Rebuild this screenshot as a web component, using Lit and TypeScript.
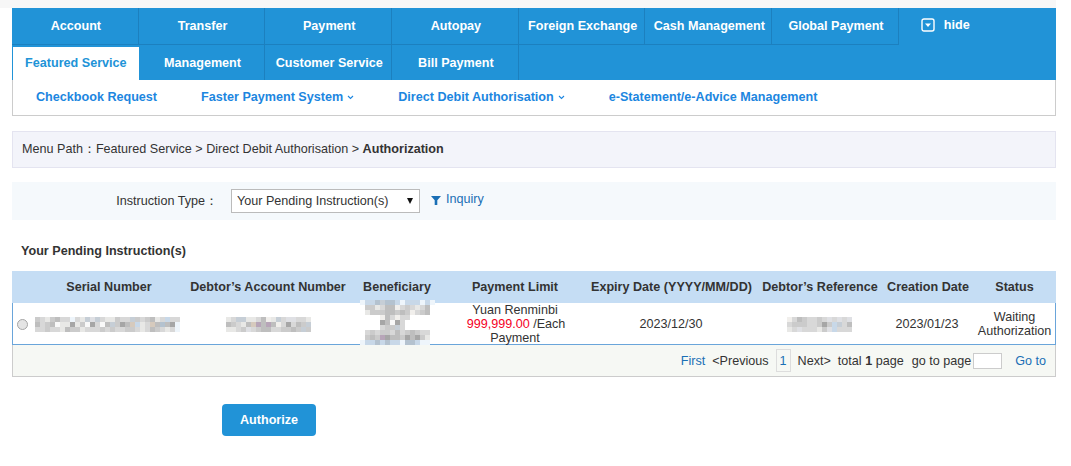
import { LitElement, html, css, svg } from "lit";
import { customElement } from "lit/decorators.js";

const PAL: Record<string, string> = {
  a: "#e8e8e6", b: "#d8d8d8", c: "#cbcbcb", d: "#bebebe", e: "#a6a6a6", f: "#f9f9f9",
  g: "#c6ced6", h: "#b7a5b8", i: "#d6cabd", j: "#eef5fb", k: "#c8d8e8", l: "#dfe0e4",
  m: "#b4c2cf", n: "#f1efec",
};

const SERIAL = [
  "cbacdbbjbaglgbaacbbgcbcdabkbb",
  "dbcdfaaeacfebfdgcedikabidmdej",
  "bbcbbadccabbbcbcbbccbabdcbabj",
];
const ACCOUNT = [
  "abggaabdnagbllbba",
  "dcbadihdhdnbebdcg",
  "aabclbcddbbccdcgc",
];
const BENEF = [
  "jkkmgmmkjkkkjkj",
  ".ccabddnbcbabd.",
  ".acccddcdcnbcd.",
  "....ndbnbb.....",
  "....edfeb......",
  "....bccgb......",
  ".bcbccbdbcdcbb.",
  ".cdcheddcedeca.",
  "jkkmkmkkjmmkjj.",
];
const REF = [
  "nbdcbbcblblbl",
  "bcccbbceckgbd",
  "ablbbbaclkbbb",
];

function mosaic(rows: string[]) {
  const w = rows[0].length * 5;
  const h = rows.length * 5;
  return html`<svg class="mosaic" width=${w} height=${h} viewBox="0 0 ${w} ${h}">
    ${rows.map((r, y) =>
      [...r].map((ch, x) =>
        PAL[ch] ? svg`<rect x=${x * 5} y=${y * 5} width="5" height="5" fill=${PAL[ch]} />` : null
      )
    )}
  </svg>`;
}

const chevron = html`<svg class="chev" width="7" height="5" viewBox="0 0 7 5"><path d="M1 1l2.500 2.500L6 1" fill="none" stroke="currentColor" stroke-width="1.1"/></svg>`;

@customElement("app-root")
export class AppRoot extends LitElement {
  static styles = css`
    :host {
      display: block;
      font-family: "Liberation Sans", Arial, sans-serif;
      font-size: 12.6px;
      color: #333;
      background: #fff;
      min-height: 466px;
    }
    .top { height: 8px; width: 1056px; background: #f7f7f7; }
    .page { width: 1044px; margin-left: 12px; }
    .nav { background: #2193d7; height: 72px; }
    .row { display: flex; }
    .row1 { height: 37px; }
    .row2 { height: 35px; }
    .cell {
      width: 126.7px; box-sizing: border-box; display: flex; align-items: center; justify-content: center;
      color: #fff; font-weight: bold; font-size: 12.6px; border-right: 1px solid #1c80bf;
      white-space: nowrap; padding-left: 2px;
    }
    .row1 .cell { border-bottom: 1px solid #1c80bf; padding-bottom: 1px; }
    .row2 .cell.active {
      background: #fff; color: #2193d7; margin: 2px 0 0 1px; width: 125.7px; border-right: none;
      padding: 0 0 2px;
    }
    .hide {
      display: flex; align-items: center; color: #fff; font-weight: bold; font-size: 12.6px;
      margin-left: 22px; gap: 9px; padding-bottom: 3px;
    }
    .subnav {
      height: 36px; box-sizing: border-box; border: 1px solid #ccc; border-top: none; display: flex;
      align-items: center; padding: 0 0 1px 1px; background: #fff;
    }
    .subnav a {
      padding: 0 22px; color: #1c86e0; font-weight: bold; font-size: 12.6px; display: flex;
      align-items: center; gap: 4px; white-space: nowrap;
    }
    .chev { margin-top: 1px; }
    .crumb {
      margin-top: 15px; height: 37px; box-sizing: border-box; background: #f3f4fa;
      border: 1px solid #e4e4f0; display: flex; align-items: center; padding: 0 0 1px 9px;
      color: #333; white-space: pre;
    }
    .crumb b { color: #333; }
    .filter {
      margin-top: 14px; height: 38px; background: #f5f9fc; display: flex; align-items: center;
    }
    .filter label { width: 206px; margin-right: 13px; text-align: right; white-space: pre; padding-top: 1px; }
    .sel { position: relative; width: 189px; height: 24px; margin-top: -1px; }
    .sel select {
      appearance: none; -webkit-appearance: none; width: 100%; height: 100%; box-sizing: border-box;
      border: 1px solid #bbb; background: #fff; font: inherit; color: #333; padding: 0 0 0 5px;
      border-radius: 0; outline: none;
    }
    .sel i {
      position: absolute; right: 7px; top: 9px; width: 0; height: 0;
      border-left: 3.5px solid transparent; border-right: 3.5px solid transparent; border-top: 6px solid #111;
    }
    .inq { display: flex; align-items: center; gap: 5px; margin-left: 11px; color: #1a6fb5; margin-top: -4px; }
    .inq svg { margin-top: 2px; }
    h3 {
      margin: 0; padding: 21px 0 10px 9px; height: 20px; line-height: 20px; font-size: 12.6px; color: #333;
    }
    .grid {
      display: grid; grid-template-columns: 20px 154px 164px 94px 142px 171px 126px 90px 83px;
      text-align: center;
    }
    .head {
      height: 32px; background: #c5ddf4; font-weight: bold; align-items: center; color: #333; white-space: nowrap;
    }
    .head > div { display: flex; justify-content: center; }
    .body {
      height: 42px; box-sizing: border-box; border: 1px solid #6aa5da; border-top: none;
      grid-template-columns: 19px 154px 164px 94px 142px 170px 126px 90px 83px;
      align-items: center; line-height: 14px; background: #fff;
    }
    .body > div { display: flex; align-items: center; justify-content: center; min-width: 0; }
    .radio {
      width: 11px; height: 11px; border-radius: 50%; border: 1px solid #a5a5a5; background: #e4e4e4; box-sizing: border-box;
      margin-right: 0;
    }
    .stack { display: block !important; white-space: nowrap; }
    .status { padding-left: 2px; }
    .red { color: #f5001e; margin-left: 2px; }
    .beneficiary { position: relative; height: 100%; }
    .beneficiary .mosaic { position: absolute; left: 10px; top: -3px; }
    .mosaic { display: block; }
    .serial { justify-content: flex-start !important; padding-left: 3px; }
    .pager {
      height: 32px; box-sizing: border-box; background: #f6f8f4; border: 1px solid #ccc; border-top: none;
      display: flex; align-items: center; justify-content: flex-end; padding-right: 9px; white-space: nowrap;
    }
    .pager a { color: #1a6fb5; }
    .goto { margin-left: 1px; }
    .num {
      border: 1px solid #ddd; height: 23px; width: 15px; box-sizing: border-box; display: flex;
      align-items: center; justify-content: center; margin: 0 7px; color: #1a6fb5;
    }
    .pager input {
      width: 29px; height: 16px; box-sizing: border-box; border: 1px solid #ccc; background: #fff;
      margin: 1px 13px 0 2px; padding: 0; outline: none;
    }
    button {
      display: block; margin: 27px 0 0 210px; width: 94px; height: 32px; border: none; border-radius: 4px;
      background: #2193d7; color: #fff; font: bold 12.6px "Liberation Sans", Arial, sans-serif; padding: 0;
    }
  `;

  render() {
    const row1 = ["Account", "Transfer", "Payment", "Autopay", "Foreign Exchange", "Cash Management", "Global Payment"];
    const row2 = ["Management", "Customer Service", "Bill Payment"];
    return html`
      <div class="top"></div>
      <div class="page">
        <div class="nav">
          <div class="row row1">
            ${row1.map((t) => html`<div class="cell">${t}</div>`)}
            <div class="hide">
              <svg width="14" height="14" viewBox="0 0 14 14"><rect x="1" y="1" width="12" height="12" rx="2" fill="none" stroke="#fff" stroke-width="1.4"/><path d="M4 5.500h6L7 9z" fill="#fff"/></svg>
              hide
            </div>
          </div>
          <div class="row row2">
            <div class="cell active">Featured Service</div>
            ${row2.map((t) => html`<div class="cell">${t}</div>`)}
          </div>
        </div>
        <div class="subnav">
          <a>Checkbook Request</a>
          <a>Faster Payment System ${chevron}</a>
          <a>Direct Debit Authorisation ${chevron}</a>
          <a>e-Statement/e-Advice Management</a>
        </div>
        <div class="crumb">Menu Path：Featured Service &gt; Direct Debit Authorisation &gt; <b>Authorization</b></div>
        <div class="filter">
          <label>Instruction Type：</label>
          <div class="sel">
            <select><option>Your Pending Instruction(s)</option></select>
            <i></i>
          </div>
          <div class="inq">
            <svg width="10" height="9" viewBox="0 0 10 9"><path d="M0 0h10L6.300 4.200V9H3.700V4.200z" fill="#1a6fb5"/></svg>
            Inquiry
          </div>
        </div>
        <h3>Your Pending Instruction(s)</h3>
        <div class="grid head">
          <div></div><div>Serial Number</div><div>Debtor’s Account Number</div><div>Beneficiary</div>
          <div>Payment Limit</div><div>Expiry Date (YYYY/MM/DD)</div><div>Debtor’s Reference</div>
          <div>Creation Date</div><div>Status</div>
        </div>
        <div class="grid body">
          <div><span class="radio"></span></div>
          <div class="serial">${mosaic(SERIAL)}</div>
          <div>${mosaic(ACCOUNT)}</div>
          <div class="beneficiary">${mosaic(BENEF)}</div>
          <div class="stack">
            <div>Yuan Renminbi</div>
            <div><span class="red">999,999.00</span> /Each</div>
            <div>Payment</div>
          </div>
          <div>2023/12/30</div>
          <div>${mosaic(REF)}</div>
          <div>2023/01/23</div>
          <div class="stack status"><div>Waiting</div><div>Authorization</div></div>
        </div>
        <div class="pager">
          <a>First</a>&nbsp;&nbsp;<span>&lt;Previous</span>
          <span class="num">1</span>
          <span>Next&gt;</span>&nbsp;&nbsp;<span>total <b>1</b> page</span>&nbsp;&nbsp;<span class="goto">go to page</span>
          <input />
          <a>Go to</a>
        </div>
        <button>Authorize</button>
      </div>
    `;
  }
}
